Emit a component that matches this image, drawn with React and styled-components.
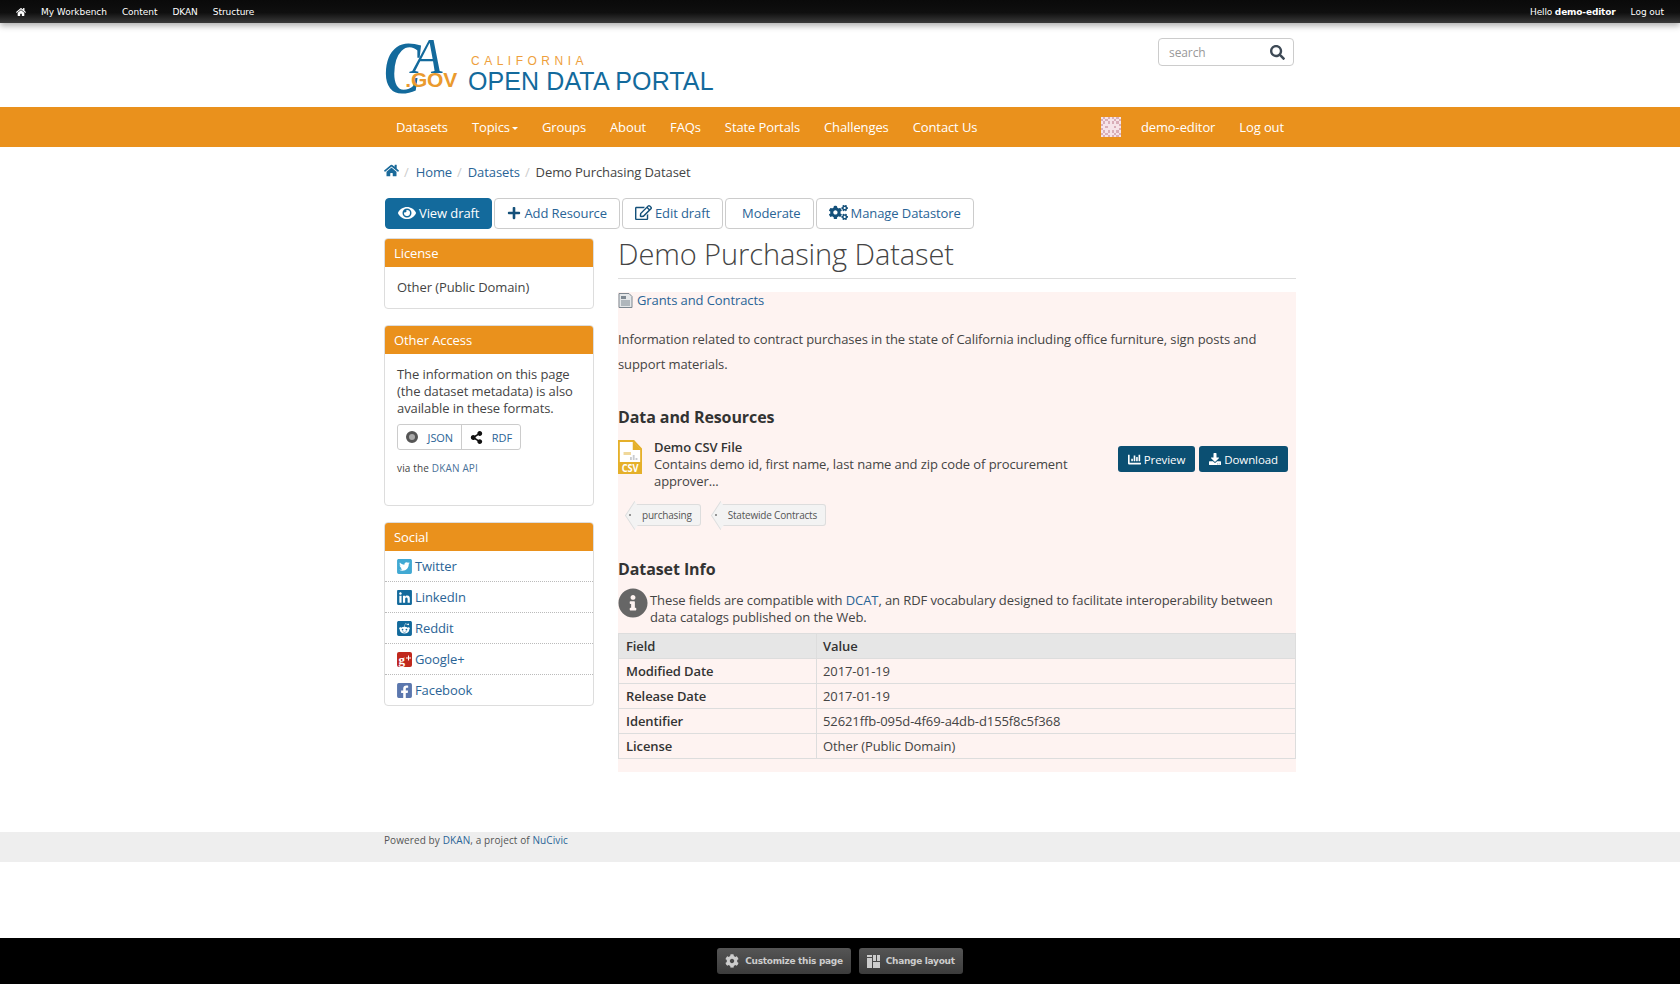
import styled, { createGlobalStyle } from 'styled-components'
import {
  FaHome, FaEye, FaPlus, FaRegEdit, FaCogs, FaSearch, FaChartBar, FaDownload, FaTwitterSquare,
  FaLinkedin, FaRedditSquare, FaFacebookSquare, FaInfoCircle, FaShareAlt, FaCog,
} from 'react-icons/fa'

const Global = createGlobalStyle`
  * { box-sizing: border-box; }
  html, body { margin: 0; padding: 0; }
  body {
    font-family: "Open Sans", "Liberation Sans", sans-serif;
    font-size: 13px;
    letter-spacing: -0.09px;
    color: #444;
    background: #fff;
  }
  a { color: #2a6496; text-decoration: none; }
`

const navLinks = ['Datasets', 'Topics', 'Groups', 'About', 'FAQs', 'State Portals', 'Challenges', 'Contact Us']

const socialLinks = [
  { name: 'Twitter', Icon: FaTwitterSquare, color: '#41a9d3' },
  { name: 'LinkedIn', Icon: FaLinkedin, color: '#136a9c' },
  { name: 'Reddit', Icon: FaRedditSquare, color: '#136a9c' },
  { name: 'Google+', Icon: GoogleSquare, color: '#c0281c' },
  { name: 'Facebook', Icon: FaFacebookSquare, color: '#5b77ae' },
]

const infoRows = [
  ['Modified Date', '2017-01-19'],
  ['Release Date', '2017-01-19'],
  ['Identifier', '52621ffb-095d-4f69-a4db-d155f8c5f368'],
  ['License', 'Other (Public Domain)'],
]

const identicon = [
  '101010101',
  '010111010',
  '101010101',
  '011111110',
  '110111011',
  '011111110',
  '101010101',
  '010111010',
  '101010101',
]

function GoogleSquare({ color }) {
  return (
    <svg width="17" height="17" viewBox="-1 0 17 17">
      <rect y="1" width="15" height="15" rx="2" fill={color} />
      <GoogleMark x="1.5" y="12.5">g</GoogleMark>
      <path d="M9 7h5M11.5 4.5v5" stroke="#fff" strokeWidth="1" />
    </svg>
  )
}

export default function App() {
  return (
    <Page>
      <Global />
      <AdminBar>
        <AdminMenu>
          <FaHome size={10} />
          <AdminLink>My Workbench</AdminLink>
          <AdminLink>Content</AdminLink>
          <AdminLink>DKAN</AdminLink>
          <AdminLink>Structure</AdminLink>
        </AdminMenu>
        <AdminMenu>
          <AdminGreeting>Hello <b>demo-editor</b></AdminGreeting>
          <AdminLink>Log out</AdminLink>
        </AdminMenu>
      </AdminBar>

      <Header>
        <Logo>
          <LogoMark>
            <LogoC>C</LogoC>
            <LogoA>A</LogoA>
            <LogoGov>.GOV</LogoGov>
          </LogoMark>
          <LogoWords>
            <LogoState>CALIFORNIA</LogoState>
            <LogoTitle>OPEN DATA PORTAL</LogoTitle>
          </LogoWords>
        </Logo>
        <Search>
          <SearchText>search</SearchText>
          <FaSearch size={15} color="#3e4a56" />
        </Search>
      </Header>

      <Nav>
        <NavInner>
          <NavGroup>
            {navLinks.map((label) => (
              <NavLink key={label}>
                {label}
                {label === 'Topics' && <Caret />}
              </NavLink>
            ))}
          </NavGroup>
          <NavGroup>
            <Identicon>
              {identicon.join('').split('').map((on, i) => (
                <IdenticonDot key={i} $on={on === '1'} />
              ))}
            </Identicon>
            <NavLink>demo-editor</NavLink>
            <NavLink>Log out</NavLink>
          </NavGroup>
        </NavInner>
      </Nav>

      <Container>
        <Breadcrumb>
          <a href="#"><FaHome size={15} color="#1a6a9a" /></a>
          <Slash $tight>/</Slash>
          <a href="#">Home</a>
          <Slash>/</Slash>
          <a href="#">Datasets</a>
          <Slash>/</Slash>
          <span>Demo Purchasing Dataset</span>
        </Breadcrumb>

        <Actions>
          <ActionButton $active><FaEye size={18} /> View draft</ActionButton>
          <ActionButton><FaPlus size={14} color="#14507a" /> Add Resource</ActionButton>
          <ActionButton><FaRegEdit size={17} color="#14507a" /> Edit draft</ActionButton>
          <ActionButton $wide>Moderate</ActionButton>
          <ActionButton><FaCogs size={19} color="#14507a" /> Manage Datastore</ActionButton>
        </Actions>

        <Columns>
          <Sidebar>
            <Panel>
              <PanelTitle>License</PanelTitle>
              <PanelBody>Other (Public Domain)</PanelBody>
            </Panel>

            <Panel>
              <PanelTitle>Other Access</PanelTitle>
              <PanelBody $tall>
                The information on this page (the dataset metadata) is also available in these formats.
                <Formats>
                  <Format $first>
                    <JsonDot />
                    JSON
                  </Format>
                  <Format>
                    <FaShareAlt size={13} color="#111" />
                    RDF
                  </Format>
                </Formats>
                <ApiNote>via the <a href="#">DKAN API</a></ApiNote>
              </PanelBody>
            </Panel>

            <Panel>
              <PanelTitle>Social</PanelTitle>
              {socialLinks.map(({ name, Icon, color }) => (
                <SocialRow key={name}>
                  <Icon size={17} color={color} />
                  <a href="#">{name}</a>
                </SocialRow>
              ))}
            </Panel>
          </Sidebar>

          <Main>
            <Title>Demo Purchasing Dataset</Title>
            <Content>
              <Group>
                <svg width="15" height="15" viewBox="0 0 15 15">
                  <path d="M1 .5h10l3 3v11H1z" fill="#e4e6e8" stroke="#7d8790" />
                  <rect x="3" y="3" width="5" height="3" fill="#7d8790" />
                  <path d="M3 8h9M3 10h9M3 12h9" stroke="#7d8790" />
                </svg>
                <a href="#">Grants and Contracts</a>
              </Group>
              <Notes>
                Information related to contract purchases in the state of California including office furniture, sign posts and support materials.
              </Notes>

              <SectionTitle>Data and Resources</SectionTitle>
              <Resource>
                <svg width="24" height="34" viewBox="0 0 26 34" preserveAspectRatio="none">
                  <path d="M1 1h16l8 8v24H1z" fill="#fff" stroke="#e5b02a" strokeWidth="2" />
                  <path d="M16 1v9h9z" fill="#e5b02a" />
                  <rect x="6" y="12" width="8" height="3" fill="#f0d89a" />
                  <path d="M14 20v-3M17 20v-5M20 20v-2" stroke="#c9ccd0" strokeWidth="2" />
                  <rect y="22" width="26" height="12" fill="#e5b02a" />
                  <CsvLabel x="13" y="32" textAnchor="middle">CSV</CsvLabel>
                </svg>
                <ResourceText>
                  <ResourceName>Demo CSV File</ResourceName>
                  Contains demo id, first name, last name and zip code of procurement approver...
                </ResourceText>
                <ResourceButtons>
                  <DarkButton><FaChartBar size={13} /> Preview</DarkButton>
                  <DarkButton><FaDownload size={12} /> Download</DarkButton>
                </ResourceButtons>
              </Resource>
              <Tags>
                <Tag>purchasing</Tag>
                <Tag>Statewide Contracts</Tag>
              </Tags>

              <SectionTitle $info>Dataset Info</SectionTitle>
              <InfoNote>
                <FaInfoCircle size={28} color="#666" />
                <span>
                  These fields are compatible with <a href="#">DCAT</a>, an RDF vocabulary designed to facilitate interoperability between data catalogs published on the Web.
                </span>
              </InfoNote>
              <Table>
                <thead>
                  <tr>
                    <Head>Field</Head>
                    <Head>Value</Head>
                  </tr>
                </thead>
                <tbody>
                  {infoRows.map(([field, value]) => (
                    <tr key={field}>
                      <FieldCell>{field}</FieldCell>
                      <Cell>{value}</Cell>
                    </tr>
                  ))}
                </tbody>
              </Table>
            </Content>
          </Main>
        </Columns>
      </Container>

      <FooterBand>
        <FooterInner>
          Powered by <a href="#">DKAN</a>, a project of <a href="#">NuCivic</a>
        </FooterInner>
      </FooterBand>

      <BottomBar>
        <BarButton><FaCog size={14} /> Customize this page</BarButton>
        <BarButton>
          <svg width="13" height="13" viewBox="0 0 13 13" fill="#ccc">
            <rect width="5" height="2" />
            <rect y="3" width="5" height="10" />
            <rect x="6" width="3" height="6" />
            <rect x="10" width="3" height="6" />
            <rect x="6" y="7" width="7" height="6" />
          </svg>
          Change layout
        </BarButton>
      </BottomBar>
    </Page>
  )
}

const Page = styled.div`
  min-height: 984px;
  display: flex;
  flex-direction: column;
`

const AdminBar = styled.div`
  height: 23px;
  padding: 0 16px;
  display: flex;
  justify-content: space-between;
  align-items: center;
  background: linear-gradient(#0a0a0a, #0f0f0f 55%, #3a3a3a);
  box-shadow: 0 3px 6px rgba(0, 0, 0, 0.3);
  color: #fff;
  font-family: "DejaVu Sans", sans-serif;
  font-size: 9px;
  letter-spacing: -0.04px;
`

const AdminMenu = styled.div`
  display: flex;
  align-items: center;
  gap: 15px;
`

const AdminLink = styled.span`
  white-space: nowrap;
`

const AdminGreeting = styled.span`
  letter-spacing: -0.15px;
`

const Header = styled.header`
  width: 912px;
  height: 84px;
  margin: 0 auto;
  display: flex;
  justify-content: space-between;
  align-items: flex-start;
`

const Logo = styled.div`
  display: flex;
  align-items: flex-end;
  height: 72px;
  gap: 11px;
`

const LogoMark = styled.div`
  position: relative;
  width: 73px;
  height: 60px;
`

const LogoC = styled.span`
  position: absolute;
  left: 0;
  top: -4px;
  font-family: "Liberation Serif", serif;
  font-style: italic;
  font-weight: 700;
  font-size: 74px;
  line-height: 74px;
  color: #136a9c;
  transform: scaleX(0.74);
  transform-origin: left top;
`

const LogoA = styled.span`
  position: absolute;
  left: 28px;
  top: -4px;
  font-family: "Liberation Serif", serif;
  font-style: italic;
  font-size: 50px;
  line-height: 50px;
  color: #136a9c;
`

const LogoGov = styled.span`
  position: absolute;
  right: 0;
  bottom: 3px;
  font-family: "Liberation Sans", sans-serif;
  font-size: 21px;
  line-height: 24px;
  font-weight: 700;
  letter-spacing: -0.2px;
  color: #ea9a2e;
`

const LogoWords = styled.div`
  display: flex;
  flex-direction: column;
  margin-bottom: 1px;
  font-family: "Liberation Sans", sans-serif;
`

const LogoState = styled.span`
  margin-left: 3px;
  font-size: 12px;
  line-height: 14px;
  letter-spacing: 4.5px;
  color: #ee9f3c;
`

const LogoTitle = styled.span`
  font-size: 25px;
  line-height: 26px;
  letter-spacing: 0.1px;
  color: #136a9c;
`

const Search = styled.div`
  width: 136px;
  height: 28px;
  margin-top: 15px;
  margin-right: 2px;
  padding: 0 8px 0 10px;
  display: flex;
  justify-content: space-between;
  align-items: center;
  border: 1px solid #ccc;
  border-radius: 4px;
`

const SearchText = styled.span`
  font-size: 12px;
  color: #999;
`

const Nav = styled.nav`
  height: 40px;
  background: #ea911c;
`

const NavInner = styled.div`
  width: 912px;
  height: 100%;
  margin: 0 auto;
  display: flex;
  justify-content: space-between;
`

const NavGroup = styled.div`
  display: flex;
  align-items: center;
`

const NavLink = styled.a`
  padding: 0 12px;
  color: #fff;
  font-size: 13px;
  letter-spacing: -0.11px;
`

const Caret = styled.span`
  display: inline-block;
  margin-left: 2px;
  vertical-align: middle;
  border-top: 3px solid #fff;
  border-left: 3px solid transparent;
  border-right: 3px solid transparent;
`

const Identicon = styled.div`
  width: 20px;
  height: 20px;
  margin-right: 8px;
  display: grid;
  grid-template-columns: repeat(9, 1fr);
  grid-template-rows: repeat(9, 1fr);
  background: #d9aeb8;
`

const IdenticonDot = styled.span`
  background: ${(p) => (p.$on ? '#f6e4e8' : 'transparent')};
`

const GoogleMark = styled.text`
  font-family: "Liberation Serif", serif;
  font-size: 13px;
  font-weight: 700;
  fill: #fff;
`

const Container = styled.div`
  width: 912px;
  margin: 0 auto;
`

const Breadcrumb = styled.div`
  height: 20px;
  margin-top: 15px;
  display: flex;
  align-items: center;
`

const Slash = styled.span`
  margin: ${(p) => (p.$tight ? '0 7px 0 5px' : '0 6px 0 5px')};
  color: #ccc;
`

const Actions = styled.div`
  margin-top: 16px;
  padding-left: 1px;
  display: flex;
  gap: 2px;
`

const ActionButton = styled.button`
  height: 31px;
  padding: ${(p) => (p.$wide ? '0 12px 2px 16px' : '0 12px 2px')};
  display: flex;
  align-items: center;
  gap: 3px;
  font: inherit;
  letter-spacing: inherit;
  color: ${(p) => (p.$active ? '#fff' : '#2a6496')};
  background: ${(p) => (p.$active ? '#136a9c' : '#fff')};
  border: 1px solid ${(p) => (p.$active ? '#136a9c' : '#ccc')};
  border-radius: 4px;
`

const Columns = styled.div`
  margin-top: 9px;
  display: grid;
  grid-template-columns: 210px 678px;
  gap: 24px;
`

const Sidebar = styled.aside`
  display: flex;
  flex-direction: column;
  gap: 16px;
`

const Panel = styled.section`
  border: 1px solid #ddd;
  border-radius: 4px;
  overflow: hidden;
`

const PanelTitle = styled.h3`
  margin: 0;
  height: 28px;
  padding: 0 9px;
  display: flex;
  align-items: center;
  font-size: 13px;
  font-weight: 400;
  color: #fff;
  background: #ea911c;
`

const PanelBody = styled.div`
  padding: ${(p) => (p.$tall ? '12px 12px 28px' : '12px')};
  line-height: 17px;
`

const Formats = styled.div`
  width: 124px;
  height: 26px;
  margin-top: 7px;
  display: flex;
  border: 1px solid #ccc;
  border-radius: 3px;
  font-size: 11px;
  color: #2a6496;
`

const Format = styled.span`
  flex: ${(p) => (p.$first ? '0 0 63px' : '1 1 auto')};
  display: flex;
  align-items: center;
  justify-content: space-between;
  padding: 0 8px;
  & + & {
    border-left: 1px solid #ccc;
  }
`

const JsonDot = styled.span`
  width: 12px;
  height: 12px;
  border: 3px solid #555;
  border-radius: 50%;
  background: #aaa;
`

const ApiNote = styled.div`
  margin-top: 10px;
  font-size: 10px;
  letter-spacing: 0.15px;
  a {
    color: #4a7299;
  }
`

const SocialRow = styled.div`
  height: 31px;
  padding: 0 11px;
  display: flex;
  align-items: center;
  gap: 2px;
  &:first-of-type {
    height: 30px;
  }
  & + & {
    border-top: 1px dotted #bbb;
  }
`

const Main = styled.main`
  min-width: 0;
`

const Title = styled.h1`
  margin: 0;
  height: 41px;
  font-size: 29px;
  font-weight: 300;
  line-height: 32px;
  color: #444;
  border-bottom: 1px solid #ddd;
`

const Content = styled.div`
  margin-top: 13px;
  padding-bottom: 13px;
  background: #fef3f1;
`

const Group = styled.div`
  height: 16px;
  display: flex;
  align-items: center;
  gap: 4px;
`

const Notes = styled.p`
  margin: 19px 0 0;
  line-height: 25px;
`

const SectionTitle = styled.h2`
  margin: ${(p) => (p.$info ? '32px 0 0' : '29px 0 0')};
  font-size: 16px;
  font-weight: 700;
  line-height: 22px;
  color: #333;
`

const Resource = styled.div`
  margin-top: 11px;
  padding-right: 8px;
  display: flex;
  align-items: flex-start;
  gap: 12px;
  > svg {
    flex: none;
    margin-top: 1px;
  }
`

const CsvLabel = styled.text`
  font-family: "Open Sans", sans-serif;
  font-size: 10px;
  font-weight: 700;
  fill: #fff;
`

const ResourceText = styled.div`
  width: 420px;
  line-height: 17px;
`

const ResourceName = styled.div`
  font-weight: 600;
  color: #333;
`

const ResourceButtons = styled.div`
  margin-left: auto;
  margin-top: 7px;
  display: flex;
  gap: 4px;
`

const DarkButton = styled.button`
  height: 26px;
  padding: 0 10px;
  display: flex;
  align-items: center;
  gap: 3px;
  font: inherit;
  font-size: 11.5px;
  letter-spacing: inherit;
  color: #fff;
  background: #0b4f72;
  border: 0;
  border-radius: 3px;
`

const Tags = styled.div`
  margin-top: 14px;
  padding-left: 16px;
  display: flex;
  gap: 19px;
`

const Tag = styled.span`
  position: relative;
  z-index: 0;
  height: 22px;
  padding: 0 8px;
  display: flex;
  align-items: center;
  font-size: 10px;
  letter-spacing: -0.2px;
  color: #555;
  background: #f3f3f3;
  border: 1px solid #ddd;
  border-left: 0;
  border-radius: 0 3px 3px 0;
  &::before {
    content: '';
    position: absolute;
    z-index: -1;
    left: -8px;
    top: 2px;
    width: 16px;
    height: 16px;
    background: #f3f3f3;
    border-left: 1px solid #ddd;
    border-bottom: 1px solid #ddd;
    transform: rotate(45deg) skew(12deg, 12deg);
  }
  &::after {
    content: '';
    position: absolute;
    left: -5px;
    top: 9px;
    width: 2px;
    height: 2px;
    border-radius: 50%;
    background: #777;
  }
`

const InfoNote = styled.div`
  margin-top: 12px;
  display: flex;
  gap: 2px;
  line-height: 17px;
  svg {
    flex: none;
    width: 30px;
    height: 30px;
    margin-top: -4px;
  }
`

const Table = styled.table`
  width: 100%;
  margin-top: 7px;
  border-collapse: collapse;
`

const Head = styled.th`
  height: 25px;
  padding: 0 6px;
  text-align: left;
  font-weight: 600;
  color: #333;
  background: #e6e6e6;
  border: 1px solid #ddd;
  &:first-child {
    width: 198px;
    padding-left: 7px;
  }
`

const Cell = styled.td`
  height: 25px;
  padding: 0 6px;
  border: 1px solid #ddd;
`

const FieldCell = styled(Cell)`
  padding-left: 7px;
  font-weight: 600;
  color: #333;
`

const FooterBand = styled.footer`
  height: 30px;
  margin-top: 60px;
  background: #eee;
`

const FooterInner = styled.div`
  width: 912px;
  margin: 0 auto;
  font-size: 10px;
  line-height: 17px;
  letter-spacing: 0.1px;
  color: #555;
`

const BottomBar = styled.div`
  height: 46px;
  margin-top: auto;
  display: flex;
  justify-content: center;
  align-items: center;
  gap: 8px;
  background: #000;
`

const BarButton = styled.div`
  height: 26px;
  padding: 0 8px;
  display: flex;
  align-items: center;
  gap: 6px;
  font-family: "DejaVu Sans", sans-serif;
  font-size: 9px;
  font-weight: 700;
  letter-spacing: -0.3px;
  color: #ccc;
  background: linear-gradient(#555, #3c3c3c);
  border-radius: 3px;
`
